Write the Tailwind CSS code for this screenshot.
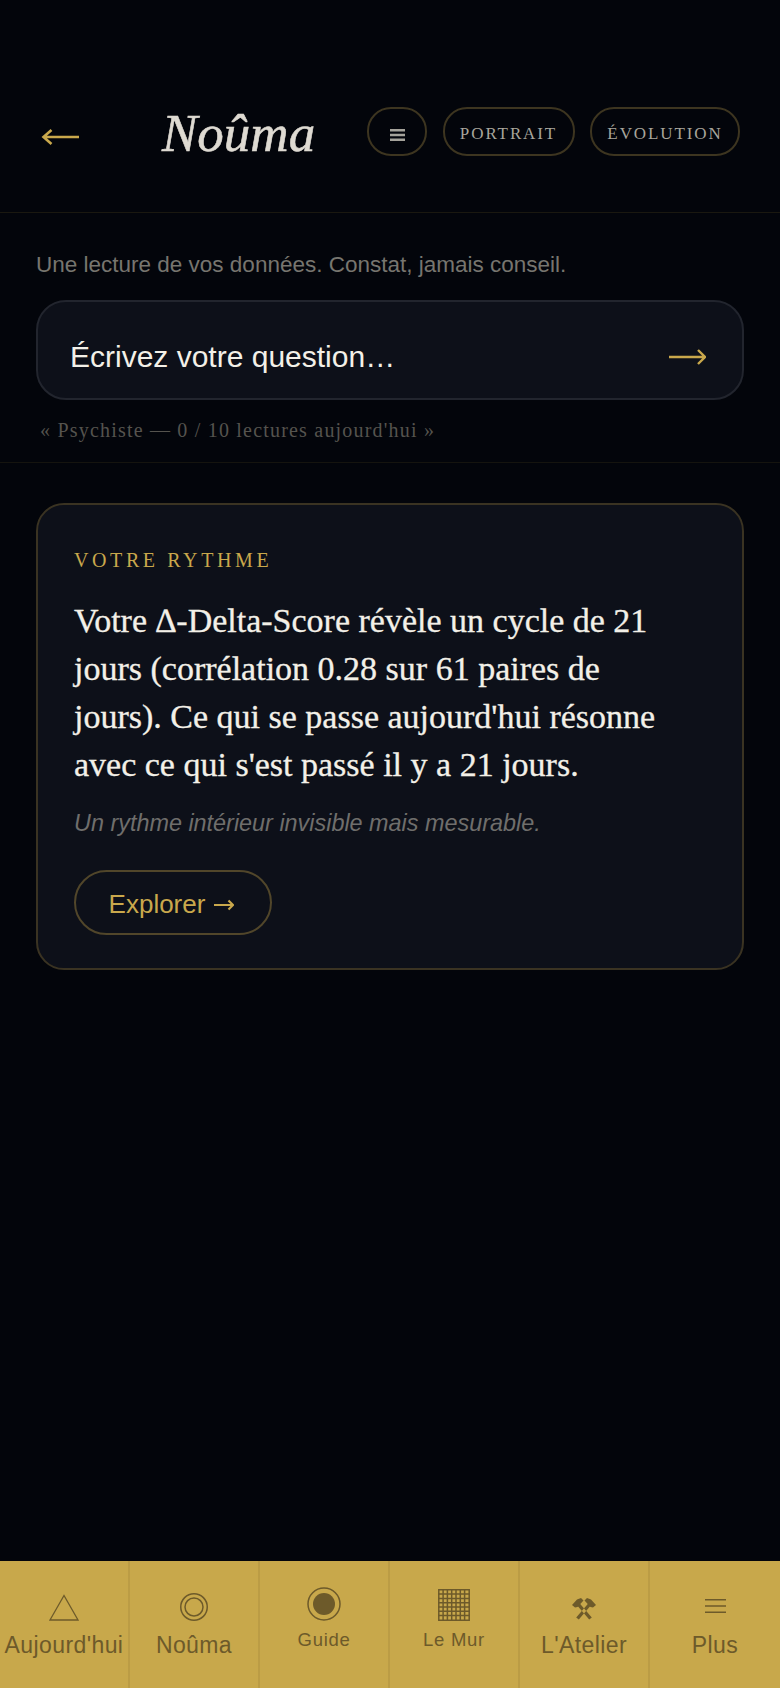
<!DOCTYPE html>
<html lang="fr">

<head>
    <meta charset="UTF-8">
    <title>Noûma</title>
    <script src="https://cdn.jsdelivr.net/npm/@tailwindcss/browser@4"></script>
</head>

<body class="bg-[#03050b] font-['Liberation_Sans',sans-serif]">
    <div class="flex flex-col h-[1688px] w-[780px] overflow-hidden">

        <!-- Header -->
        <header class="flex items-center h-[213px] pt-[51px] pl-[41px] pr-[40px] border-b border-[#1a1810]">
            <button class="mt-[10px] text-[#c9a84c]">
                <svg class="block w-[38px] h-[20px]" viewBox="0 0 38 20" fill="none" stroke="currentColor" stroke-width="2.600">
                    <path d="M2 10h36M10.500 3 2.500 10l8 7" />
                </svg>
            </button>
            <h1 class="ml-[83px] mt-[4px] w-[205px] text-[53px] leading-none italic text-[#dedad2] [-webkit-text-stroke:0.6px] font-['Liberation_Serif',serif]">Noûma</h1>
            <div class="flex gap-[15.5px]">
                <button class="flex items-center justify-center w-[60px] h-[49px] rounded-[24px] border-2 border-[#3d3520] text-[#a5a39b]">
                    <svg class="mt-[6px] w-[15px] h-[12px]" viewBox="0 0 15 12" fill="currentColor">
                        <path d="M0 0h15v2.600H0zM0 4.700h15v2.600H0zM0 9.400h15V12H0z" />
                    </svg>
                </button>
                <button class="w-[132px] h-[49px] pt-[5px] rounded-[24px] border-2 border-[#3d3520] text-[17px] tracking-[1.9px] text-[#a8a59c] font-['Liberation_Serif',serif]">PORTRAIT</button>
                <button class="w-[150px] h-[49px] pt-[5px] rounded-[24px] border-2 border-[#3d3520] text-[17px] tracking-[1.9px] text-[#a8a59c] font-['Liberation_Serif',serif]">ÉVOLUTION</button>
            </div>
        </header>

        <!-- Question -->
        <section class="h-[250px] px-[36px] pt-[38px] border-b border-[#15140f]">
            <p class="text-[22.500px] leading-[28px] text-[#77756f]">Une lecture de vos données. Constat, jamais conseil.</p>
            <div class="flex items-center h-[100px] mt-[21px] pl-[32px] pr-[36px] bg-[#0d1019] border-2 border-[#22252e] rounded-[30px]">
                <input type="text" placeholder="Écrivez votre question…" class="flex-1 pt-[13px] bg-transparent text-[30px] outline-none placeholder:text-[#f3f0e8]">
                <svg class="mt-[13px] w-[37px] h-[16px] text-[#c9a84c]" viewBox="0 0 37 16" fill="none" stroke="currentColor" stroke-width="2.400">
                    <path d="M0 8h36M29 1l7 7-7 7" />
                </svg>
            </div>
            <p class="mt-[18px] pl-[4px] text-[20px] leading-[24px] tracking-[1.200px] text-[#55534e] font-['Liberation_Serif',serif]">« Psychiste — 0 / 10 lectures aujourd'hui »</p>
        </section>

        <!-- Card -->
        <main class="flex-1 px-[36px] pt-[40px]">
            <article class="h-[467px] px-[36px] pt-[43px] bg-[#0d1019] border-2 border-[#3a3322] rounded-[28px]">
                <h2 class="text-[20px] leading-[24px] tracking-[3.600px] text-[#c9a84c] font-['Liberation_Serif',serif]">VOTRE RYTHME</h2>
                <p class="mt-[25px] text-[34px] leading-[48px] text-[#f3f0e8] [-webkit-text-stroke:0.3px] font-['Liberation_Serif',serif]">Votre ∆-Delta-Score révèle un cycle de 21<br>jours (corrélation 0.28 sur 61 paires de<br>jours). Ce qui se passe aujourd'hui résonne<br>avec ce qui s'est passé il y a 21 jours.</p>
                <p class="mt-[18px] text-[23.400px] leading-[32px] italic text-[#6f6e6c]">Un rythme intérieur invisible mais mesurable.</p>
                <button class="flex items-center justify-center gap-[9px] w-[198px] h-[65px] mt-[31px] pt-[4px] pr-[3px] rounded-full border-2 border-[#51462a] text-[26px] text-[#c9a84c]">
                    Explorer
                    <svg class="w-[20px] h-[14px]" viewBox="0 0 20 14" fill="none" stroke="currentColor" stroke-width="2.200">
                        <path d="M0 7h19M14.500 2.500 19 7l-4.500 4.500" />
                    </svg>
                </button>
            </article>
        </main>

        <!-- Bottom nav -->
        <nav class="grid grid-cols-6 h-[127px] bg-[#c8a84b] text-[#6d5a2a]">
            <a class="flex flex-col items-center pt-[26px] border-r-2 border-[#bb9c45]">
                <span class="flex items-end justify-center h-[34px]">
                    <svg class="w-[30px] h-[28px]" viewBox="0 0 30 28" fill="none" stroke="currentColor" stroke-width="1.300">
                        <path d="M15 2.500 1 27h28z" />
                    </svg>
                </span>
                <span class="mt-[10px] text-[23px] leading-[28px] tracking-[.4px]">Aujourd'hui</span>
            </a>
            <a class="flex flex-col items-center pt-[26px] border-r-2 border-[#bb9c45]">
                <span class="flex items-end justify-center h-[34px]">
                    <svg class="w-[28px] h-[28px]" viewBox="0 0 28 28" fill="none" stroke="currentColor" stroke-width="1.500">
                        <circle cx="14" cy="14" r="13.250" />
                        <circle cx="14" cy="14" r="9" />
                    </svg>
                </span>
                <span class="mt-[10px] text-[23px] leading-[28px] tracking-[.4px]">Noûma</span>
            </a>
            <a class="flex flex-col items-center pt-[26px] border-r-2 border-[#bb9c45]">
                <span class="flex items-end justify-center h-[34px]">
                    <svg class="w-[34px] h-[34px]" viewBox="0 0 34 34" fill="none" stroke="currentColor" stroke-width="1.500">
                        <circle cx="17" cy="17" r="16" />
                        <circle cx="17" cy="17" r="11" fill="currentColor" stroke="none" />
                    </svg>
                </span>
                <span class="mt-[7px] text-[18.500px] leading-[24px] tracking-[.7px]">Guide</span>
            </a>
            <a class="flex flex-col items-center pt-[26px] border-r-2 border-[#bb9c45]">
                <span class="flex items-end justify-center h-[34px]">
                    <svg class="w-[32px] h-[32px]" viewBox="0 0 32 32" fill="none" stroke="currentColor" stroke-width="1.500">
                        <path d="M.8.8h30.400v30.400H.8z" />
                        <path d="M5.100 0v32M9.400 0v32M13.700 0v32M18 0v32M22.300 0v32M26.600 0v32M0 5.100h32M0 9.400h32M0 13.700h32M0 18h32M0 22.300h32M0 26.600h32" />
                    </svg>
                </span>
                <span class="mt-[7px] text-[18.500px] leading-[24px] tracking-[.7px]">Le Mur</span>
            </a>
            <a class="flex flex-col items-center pt-[26px] border-r-2 border-[#bb9c45]">
                <span class="flex items-end justify-center h-[33px] mb-[1px]">
                    <svg class="w-[24px] h-[22px]" viewBox="0 0 24 22" fill="currentColor">
                        <path d="M7.800 5.400 19.800 19.400 17.200 21.600 5.200 7.600zM16.200 5.400 4.200 19.400 6.800 21.600 18.800 7.600z" />
                        <path d="M0 7 5 1.500 9 0 11.500 2.500 5.500 9 3 9.500zM24 7 19 1.500 15 0 12.500 2.500 18.500 9 21 9.500z" />
                    </svg>
                </span>
                <span class="mt-[10px] text-[23px] leading-[28px] tracking-[.4px]">L'Atelier</span>
            </a>
            <a class="flex flex-col items-center pt-[26px]">
                <span class="flex items-end justify-center h-[26px] mb-[8px]">
                    <svg class="w-[21px] h-[14px]" viewBox="0 0 21 14" fill="currentColor">
                        <path d="M0 0h21v1.500H0zM0 6.250h21v1.500H0zM0 12.500h21V14H0z" />
                    </svg>
                </span>
                <span class="mt-[10px] text-[23px] leading-[28px] tracking-[.4px]">Plus</span>
            </a>
        </nav>
    </div>
</body>

</html>
